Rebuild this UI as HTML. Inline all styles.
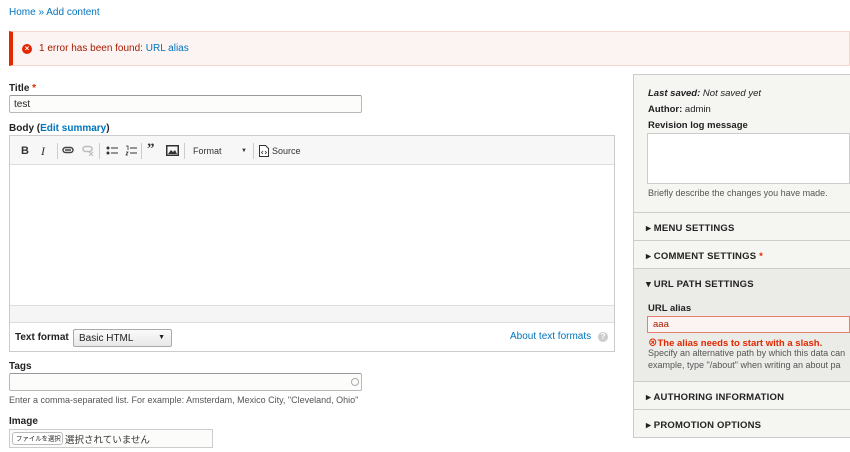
<!DOCTYPE html>
<html><head><meta charset="utf-8"><style>
*{box-sizing:border-box;margin:0;padding:0}
body{width:850px;height:452px;overflow:hidden;background:#fff;font-family:"Liberation Sans","Noto Sans CJK JP",sans-serif;font-size:10px;color:#222;position:relative}
.a{position:absolute}
a,.lk{color:#0074bd;text-decoration:none}
.lbl{font-weight:bold;font-size:10px;color:#222}
.in{border:1px solid #b8b8b8;border-top-color:#999;background:#fcfcfa;border-radius:2px}
.help{font-size:9px;color:#555}
.sec{position:absolute;left:634px;width:216px;border-top:1px solid #ccc;font-weight:bold;font-size:9.5px;color:#222;letter-spacing:.2px}
.sec span{position:absolute;left:12px}
.tb{position:absolute;top:145px;font-size:10px;color:#333}
.sep{position:absolute;top:143px;width:1px;height:16px;background:#ccc}
svg{position:absolute}
</style></head><body>
<div class="a" style="left:9px;top:7px;font-size:10px"><a>Home</a> <span style="color:#0074bd">»</span> <a>Add content</a></div>

<div class="a" style="left:9px;top:31px;width:841px;height:35px;background:#fcf4f2;border:1px solid #f6d6cf;border-left:4px solid #e32700"></div>
<div class="a" style="left:22px;top:44px;width:10px;height:10px;border-radius:50%;background:#e32700;color:#fff;font-size:8px;line-height:10px;text-align:center;font-weight:bold">×</div>
<div class="a" style="left:39px;top:43px;font-size:10px;color:#a51b00">1 error has been found: <span class="lk">URL alias</span></div>

<div class="a lbl" style="left:9px;top:83px">Title <span style="color:#e32700">*</span></div>
<div class="a in" style="left:9px;top:95px;width:353px;height:18px"></div>
<div class="a" style="left:14px;top:99px;font-size:10px">test</div>

<div class="a lbl" style="left:9px;top:123px">Body (<span class="lk">Edit summary</span>)</div>
<div class="a" style="left:9px;top:135px;width:606px;height:217px;border:1px solid #ccc"></div>
<div class="a" style="left:10px;top:136px;width:604px;height:29px;background:#f7f7f7;border-bottom:1px solid #ddd"></div>
<div class="tb" style="left:21px;font-weight:bold;font-size:11px">B</div>
<div class="tb" style="left:41px;font-style:italic;font-family:'Liberation Serif',serif;font-size:12px;top:144px">I</div>
<div class="sep" style="left:57px"></div>
<svg style="left:62px;top:146px" width="12" height="8"><rect x="1" y="1.5" width="10" height="5" rx="2.5" fill="none" stroke="#444" stroke-width="1.5"/><line x1="3" y1="4" x2="9" y2="4" stroke="#444" stroke-width="1.5"/></svg>
<svg style="left:82px;top:145px" width="12" height="11"><rect x="1" y="1.5" width="9" height="5" rx="2.5" fill="none" stroke="#bbb" stroke-width="1.5"/><path d="M7 7l4 4M11 7l-4 4" stroke="#bbb"/></svg>
<div class="sep" style="left:99px"></div>
<svg style="left:106px;top:145px" width="12" height="11"><circle cx="2" cy="3" r="1.5" fill="#333"/><circle cx="2" cy="8" r="1.5" fill="#333"/><path d="M5 3h7M5 8h7" stroke="#333"/></svg>
<svg style="left:125px;top:145px" width="12" height="11"><path d="M1 1h2v4M1 7h2l-2 3h2" stroke="#333" fill="none" stroke-width=".8"/><path d="M5 3h7M5 8h7" stroke="#333"/></svg>
<div class="sep" style="left:141px"></div>
<div class="tb" style="left:147px;font-weight:bold;font-size:15px;top:141px;font-family:'Liberation Serif',serif">”</div>
<svg style="left:166px;top:145px" width="13" height="11"><rect x="0.75" y="0.75" width="11.5" height="9.5" fill="none" stroke="#333" stroke-width="1.5"/><path d="M2 9l3-4 2 2 2-2 2 4z" fill="#333"/></svg>
<div class="sep" style="left:184px"></div>
<div class="tb" style="left:193px;font-size:9px;top:146px">Format</div>
<div class="tb" style="left:241px;font-size:6px;top:148px">▼</div>
<div class="sep" style="left:253px"></div>
<svg style="left:259px;top:145px" width="10" height="12"><path d="M.5 .5h6l3 3v8h-9z" fill="#fff" stroke="#333"/><path d="M4 6l-1.5 1.5L4 9M6 6l1.5 1.5L6 9" stroke="#333" fill="none" stroke-width=".8"/></svg>
<div class="tb" style="left:272px;font-size:9px;top:146px">Source</div>
<div class="a" style="left:10px;top:305px;width:604px;height:18px;background:#f5f5f5;border-top:1px solid #ddd;border-bottom:1px solid #ddd"></div>
<div class="a lbl" style="left:15px;top:332px">Text format</div>
<div class="a" style="left:73px;top:329px;width:99px;height:18px;border:1px solid #aaa;background:linear-gradient(#fafafa,#e8e8e8);border-radius:2px;font-size:10px;padding:3px 5px">Basic HTML<span style="position:absolute;right:6px;top:4px;font-size:7px">▼</span></div>
<div class="a lk" style="left:510px;top:331px;font-size:10px">About text formats</div>
<div class="a" style="left:598px;top:332px;width:10px;height:10px;border-radius:50%;background:#ccc;color:#fff;font-size:8px;line-height:10px;text-align:center;font-weight:bold">?</div>

<div class="a lbl" style="left:9px;top:361px">Tags</div>
<div class="a in" style="left:9px;top:373px;width:353px;height:18px"></div>
<div class="a" style="left:351px;top:378px;width:8px;height:8px;border:1px solid #aaa;border-radius:50%"></div>
<div class="a help" style="left:9px;top:395px">Enter a comma-separated list. For example: Amsterdam, Mexico City, "Cleveland, Ohio"</div>
<div class="a lbl" style="left:9px;top:416px">Image</div>
<div class="a" style="left:9px;top:429px;width:204px;height:19px;border:1px solid #ccc;background:#fcfcfa"></div>
<div class="a" style="left:12px;top:432px;width:51px;height:13px;border:1px solid #bbb;border-radius:3px;background:#fff;font-size:8px;line-height:11px;white-space:nowrap;overflow:hidden"><span style="display:inline-block;transform:scale(.8);transform-origin:0 50%;margin-left:3px">ファイルを選択</span></div>
<div class="a" style="left:65px;top:432px;font-size:9.5px;color:#333">選択されていません</div>

<div class="a" style="left:633px;top:74px;width:217px;height:364px;background:#f5f5f2;border:1px solid #ccc;border-right:none"></div>
<div class="a" style="left:648px;top:88px;font-size:9.5px;font-style:italic"><b>Last saved:</b> Not saved yet</div>
<div class="a" style="left:648px;top:104px;font-size:9.5px"><b>Author:</b> admin</div>
<div class="a lbl" style="left:648px;top:120px;font-size:9.5px">Revision log message</div>
<div class="a" style="left:647px;top:133px;width:203px;height:51px;border:1px solid #ccc;background:#fff"></div>
<div class="a help" style="left:648px;top:188px">Briefly describe the changes you have made.</div>
<div class="sec" style="top:212px;height:28px"><span style="top:10px">▸ MENU SETTINGS</span></div>
<div class="sec" style="top:240px;height:28px"><span style="top:10px">▸ COMMENT SETTINGS<b style="color:#e32700"> *</b></span></div>
<div class="sec" style="top:268px;height:113px;background:#ebebe8"><span style="top:10px">▾ URL PATH SETTINGS</span></div>
<div class="a lbl" style="left:648px;top:303px;font-size:9.5px">URL alias</div>
<div class="a" style="left:647px;top:316px;width:203px;height:17px;border:1px solid #e3806b;background:#fcf4f2"></div>
<div class="a" style="left:653px;top:319px;font-size:9.5px;color:#a51b00">aaa</div>
<div class="a" style="left:648px;top:335px;font-size:9.5px;font-weight:bold;color:#e32700;white-space:nowrap">⊗The alias needs to start with a slash.</div>
<div class="a help" style="left:648px;top:347px;white-space:nowrap;line-height:12px">Specify an alternative path by which this data can<br>example, type "/about" when writing an about pa</div>
<div class="sec" style="top:381px;height:28px"><span style="top:10px">▸ AUTHORING INFORMATION</span></div>
<div class="sec" style="top:409px;height:29px;border-bottom:1px solid #ccc"><span style="top:10px">▸ PROMOTION OPTIONS</span></div>
</body></html>
